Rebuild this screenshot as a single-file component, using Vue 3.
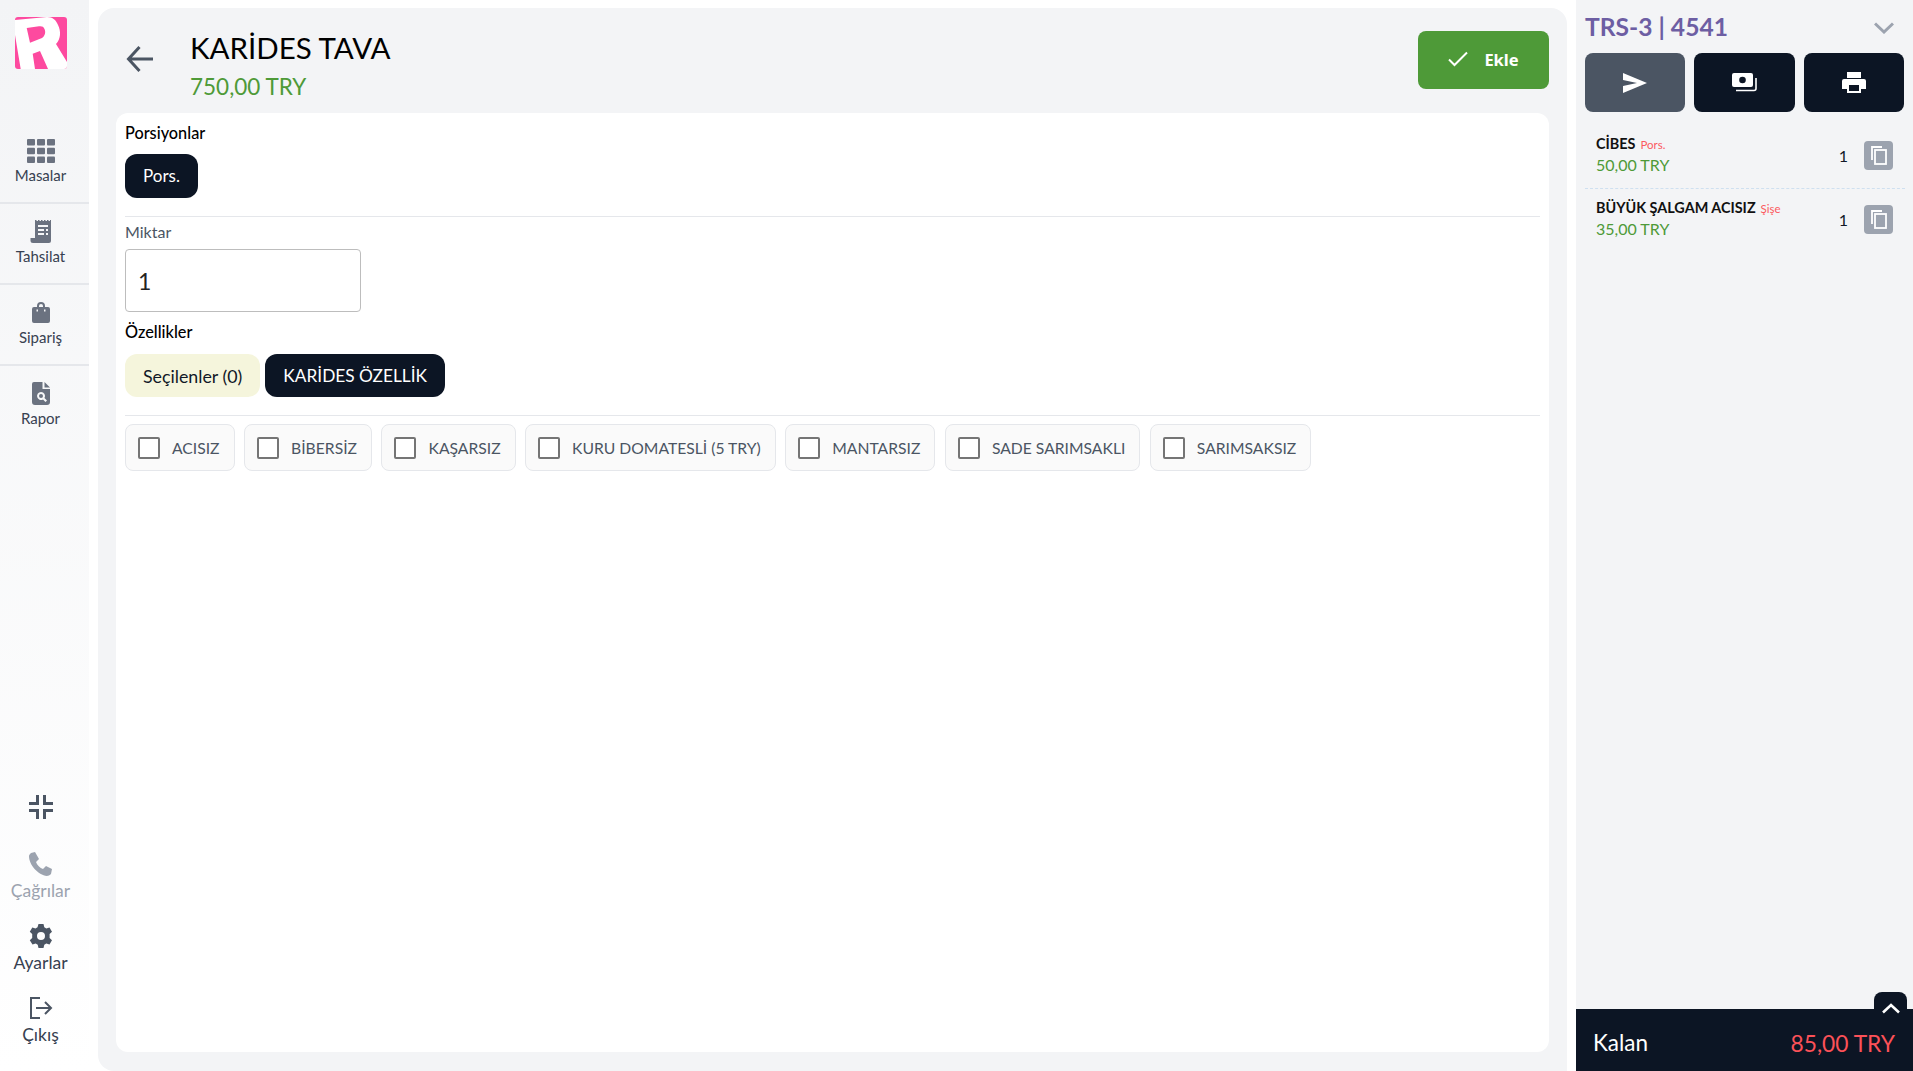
<script setup>
const nav = [
  { label: 'Masalar', icon: 'grid' },
  { label: 'Tahsilat', icon: 'receipt' },
  { label: 'Sipariş', icon: 'bag' },
  { label: 'Rapor', icon: 'report' }
]
const options = ['ACISIZ', 'BİBERSİZ', 'KAŞARSIZ', 'KURU DOMATESLİ (5 TRY)', 'MANTARSIZ', 'SADE SARIMSAKLI', 'SARIMSAKSIZ']
const items = [
  { name: 'CİBES', unit: 'Pors.', price: '50,00 TRY' },
  { name: 'BÜYÜK ŞALGAM ACISIZ', unit: 'Şişe', price: '35,00 TRY' }
]
</script>

<template>
  <div class="app">
    <aside class="side">
      <svg class="logo" viewBox="0 0 52 52">
        <rect width="52" height="52" rx="3" fill="#fd4a9f" />
        <path fill="#fff" fill-rule="evenodd" d="M0 3 32 0C38 0 41 3 43 8 46 14 46 22 41 27L52 45V49A3 3 0 0 1 49 52H33L25 34 17.700 36.700 20 52H5.700L0 18ZM11.700 11 15 25.700 27 21C30 19 31 15 29.500 12 28.500 9.500 27 9 24 9.300Z" />
      </svg>
      <nav class="nav">
        <a v-for="n in nav" :key="n.label" class="nav-item">
          <svg v-if="n.icon === 'grid'" class="nav-ic" viewBox="0 0 28 24" fill="#6b7280">
            <rect x="0" y="0" width="8" height="6.500" rx="1" /><rect x="10" y="0" width="8" height="6.500" rx="1" /><rect x="20" y="0" width="8" height="6.500" rx="1" />
            <rect x="0" y="8.700" width="8" height="6.500" rx="1" /><rect x="10" y="8.700" width="8" height="6.500" rx="1" /><rect x="20" y="8.700" width="8" height="6.500" rx="1" />
            <rect x="0" y="17.500" width="8" height="6.500" rx="1" /><rect x="10" y="17.500" width="8" height="6.500" rx="1" /><rect x="20" y="17.500" width="8" height="6.500" rx="1" />
          </svg>
          <svg v-else-if="n.icon === 'receipt'" class="nav-ic" viewBox="0 0 24 24" fill="#6b7280">
            <path d="M6 1h16v20a2 2 0 0 1-2 2H4a2.500 2.500 0 0 1-2.500-2.500V18H6ZM9 5v2h10V5Zm0 4v2h6V9Zm8 0v2h2V9Zm-8 4v2h6v-2Zm8 0v2h2v-2Z" fill-rule="evenodd" />
            <path d="M6 0h1.500v1H6Zm3 0h1.500v1H9Zm3 0h1.500v1H12Zm3 0h1.500v1H15Zm3 0h1.500v1H18Zm3 0h1v1h-1Z" />
          </svg>
          <svg v-else-if="n.icon === 'bag'" class="nav-ic" viewBox="0 0 24 24" fill="#6b7280">
            <path fill-rule="evenodd" d="M8 6V5a4 4 0 0 1 8 0v1h3a2 2 0 0 1 2 2v12a2 2 0 0 1-2 2H5a2 2 0 0 1-2-2V8a2 2 0 0 1 2-2ZM10 6h4V5a2 2 0 0 0-4 0ZM7.500 8.500v2h1.500v-2Zm7.500 0v2h1.500v-2Z" />
          </svg>
          <svg v-else class="nav-ic" viewBox="0 0 24 24" fill="#6b7280">
            <path fill-rule="evenodd" d="M5 0h8.500v7H21v13a3 3 0 0 1-3 3H6a3 3 0 0 1-3-3V2a2 2 0 0 1 2-2Zm10.500 0L21 5.500h-5.500ZM12 10a4 4 0 1 0 2 7.500l2.500 2.500 1.500-1.500-2.500-2.500A4 4 0 0 0 12 10Zm0 2a2 2 0 1 1 0 4 2 2 0 0 1 0-4Z" />
          </svg>
          <span>{{ n.label }}</span>
        </a>
      </nav>
      <div class="side-foot">
        <svg class="shrink" viewBox="0 0 24 24" fill="#4b5563"><path d="M0 7h7V0h3v10H0ZM14 0h3v7h7v3H14ZM0 14h10v10H7v-7H0ZM14 14h10v3h-7v7h-3Z" /></svg>
        <a class="foot-item muted">
          <svg viewBox="0 0 24 24" fill="#9ca3af"><path d="M3 1 7 0l4 7-3 3c1 3 4 6 7 7l3-3 6 3-1 5c-1 1-3 2-4 2C10 23 1 13 1 4c0-1 1-2 2-3Z" /></svg>
          <span>Çağrılar</span>
        </a>
        <a class="foot-item">
          <svg viewBox="0 0 24 24" fill="#4b5563"><path fill-rule="evenodd" d="M9.500 0h5l.8 3.300 2 1.100 3.200-1 2.500 4.300-2.400 2.300v4l2.400 2.300-2.500 4.300-3.200-1-2 1.100-.8 3.300h-5l-.8-3.300-2-1.100-3.200 1L.8 16.300l2.400-2.300v-4L.8 7.700l2.500-4.300 3.200 1 2-1.100ZM12 8a4 4 0 1 0 0 8 4 4 0 0 0 0-8Z" /></svg>
          <span>Ayarlar</span>
        </a>
        <a class="foot-item">
          <svg viewBox="0 0 24 24" fill="none" stroke="#4b5563" stroke-width="2"><path d="M11 2H2v20h9M7 12h15M16 6l6 6-6 6" /></svg>
          <span>Çıkış</span>
        </a>
      </div>
    </aside>

    <main class="main">
      <header class="head">
        <svg class="back" viewBox="0 0 28 28" fill="none" stroke="#4b5563" stroke-width="3"><path d="M27 14H2.500M13.500 2 2.500 14l11 12" /></svg>
        <div class="title">
          <h1>KARİDES TAVA</h1>
          <p>750,00 TRY</p>
        </div>
        <button class="add">
          <svg viewBox="0 0 20 16" fill="none" stroke="#fff" stroke-width="2"><path d="M1 8.500 6.500 14 19 1.500" /></svg>
          <span>Ekle</span>
        </button>
      </header>
      <section class="card">
        <h2>Porsiyonlar</h2>
        <button class="pill dark small">Pors.</button>
        <hr class="rule" />
        <label class="lbl">Miktar</label>
        <div class="qty">1</div>
        <h2 class="mt">Özellikler</h2>
        <div class="tabs">
          <button class="pill soft">Seçilenler (0)</button>
          <button class="pill dark tight">KARİDES ÖZELLİK</button>
        </div>
        <hr class="rule r2" />
        <div class="opts">
          <label v-for="o in options" :key="o" class="opt"><i class="box"></i><span>{{ o }}</span></label>
        </div>
      </section>
    </main>

    <aside class="right">
      <div class="r-head">
        <span class="tbl">TRS-3 | 4541</span>
        <svg class="chev" viewBox="0 0 20 12" fill="none" stroke="#9ca3af" stroke-width="3"><path d="M1 1.500 10 10l9-8.500" /></svg>
      </div>
      <div class="actions">
        <button class="act grey">
          <svg width="24" height="20" viewBox="0 0 24 20" fill="#fff"><path d="M0 0 24 10 0 20V13L14 10 0 7Z" /></svg>
        </button>
        <button class="act mid">
          <svg width="25" height="19" viewBox="0 0 25 19"><path fill="#fff" d="M2 0h17a2 2 0 0 1 2 2v10a2 2 0 0 1-2 2H2a2 2 0 0 1-2-2V2a2 2 0 0 1 2-2Z" /><circle cx="10.500" cy="7" r="3.300" fill="#0c1524" /><path fill="none" stroke="#fff" stroke-width="1.600" d="M24 5v10.500a2 2 0 0 1-2 2H4" /></svg>
        </button>
        <button class="act">
          <svg width="24" height="21" viewBox="0 0 24 21" fill="#fff"><path fill-rule="evenodd" d="M5 0h14v6H5ZM2 7h20a2 2 0 0 1 2 2v8h-5v4H5v-4H0V9a2 2 0 0 1 2-2Zm5 6v6h10v-6Z" /></svg>
        </button>
      </div>
      <ul class="lines">
        <li v-for="it in items" :key="it.name" class="line">
          <div class="l-info">
            <div class="l-name"><b>{{ it.name }}</b><em>{{ it.unit }}</em></div>
            <div class="l-price">{{ it.price }}</div>
          </div>
          <span class="l-qty">1</span>
          <button class="copy">
            <svg width="16" height="19" viewBox="0 0 16 19" fill="none" stroke="#fff" stroke-width="1.800"><path d="M1 14V1h10" /><rect x="4" y="4" width="11" height="14" /></svg>
          </button>
        </li>
      </ul>
      <footer class="total">
        <button class="up">
          <svg width="18" height="11" viewBox="0 0 18 11" fill="none" stroke="#fff" stroke-width="2.600"><path d="M1 9.500 9 2l8 7.500" /></svg>
        </button>
        <span class="k">Kalan</span>
        <span class="v">85,00 TRY</span>
      </footer>
    </aside>
  </div>
</template>

<style>
html, body { margin: 0; background: #fff; }
</style>

<style scoped>
* { box-sizing: border-box; }
.app {
  display: flex;
  width: 1913px;
  height: 1071px;
  overflow: hidden;
  font-family: "Lato", "Noto Sans", sans-serif;
  color: #111827;
  background: #fff;
}
.side {
  width: 89px;
  flex: none;
  display: flex;
  flex-direction: column;
  align-items: center;
  background: linear-gradient(180deg, #f3f4f6 0%, #ffffff 100%);
}
.logo { width: 52px; height: 52px; margin: 17px 7px 0 0; flex: none; }
.nav { margin-top: 54px; width: 100%; display: flex; flex-direction: column; }
.nav-item {
  height: 81px;
  padding: 16px 8px 0 0;
  display: flex;
  flex-direction: column;
  align-items: center;
  border-bottom: 2px solid #e5e7eb;
  font-size: 15px;
  line-height: 18px;
  color: #374151;
}
.nav-item:last-child { border-bottom: 0; }
.nav-ic { width: 28px; height: 24px; margin-bottom: 3px; }
.side-foot { margin-top: auto; width: 100%; display: flex; flex-direction: column; align-items: center; padding: 0 8px 3px 0; }
.shrink { width: 24px; height: 24px; margin-bottom: 33px; }
.foot-item { display: flex; flex-direction: column; align-items: center; font-size: 17.500px; color: #374151; height: 72px; }
.foot-item svg { width: 24px; height: 24px; margin-bottom: 4px; }
.foot-item.muted { color: #9ca3af; }
.main {
  margin: 8px 9px 0;
  width: 1469px;
  flex: none;
  height: 1063px;
  background: #f3f4f6;
  border-radius: 16px 16px 0 16px;
  padding: 0 18px 19px;
  display: flex;
  flex-direction: column;
}
.head { height: 105px; flex: none; display: flex; align-items: flex-start; }
.back { width: 28px; height: 28px; margin: 37px 0 0 10px; flex: none; }
.title { margin-left: 36px; padding-top: 20px; flex: 1; }
.title h1 { margin: 0; font-size: 29.500px; line-height: 40px; font-weight: 400; color: #000; }
.title p { margin: 4px 0 0; font-size: 22.500px; line-height: 30px; color: #4e9a38; }
.add {
  width: 131px; height: 58px; margin-top: 23px; padding: 0 0 2px;
  background: #4e9a38; border: 0; border-radius: 8px;
  display: flex; align-items: center; justify-content: center; gap: 16px;
  color: #fff; font: 700 16.500px "Noto Sans", sans-serif;
}
.add svg { width: 20px; height: 16px; }
.card {
  flex: 1;
  background: #fff;
  border-radius: 12px;
  padding: 9px;
}
h2 { margin: 0; font-size: 16.300px; line-height: 22px; font-weight: 500; color: #000; }
h2.mt { margin-top: 9px; }
.pill {
  height: 43px; padding: 0 18px; border: 0; border-radius: 12px;
  font: 400 17.800px "Lato", sans-serif;
}
.pill.small { margin-top: 10px; display: block; height: 44px; padding-bottom: 2px; font-size: 17px; }
.pill.tight { font-size: 17.300px; }
.dark { background: #0c1524; color: #fff; }
.soft { background: #f5f5dc; color: #111827; }
.rule { border: 0; border-top: 1px solid #e5e7eb; margin: 18px 0 0; }
.r2 { margin-top: 18px; }
.lbl { display: block; margin-top: 4px; font-size: 16px; line-height: 22px; color: #4b5563; }
.qty {
  width: 236px; height: 63px; margin-top: 6px;
  border: 1px solid #bdbdbd; border-radius: 4px;
  display: flex; align-items: center; padding-left: 12px;
  font-size: 23px; color: #222;
}
.tabs { display: flex; gap: 5px; margin-top: 11px; }
.opts { display: flex; gap: 9.500px; margin-top: 8px; }
.opt {
  height: 47px; padding: 0 14px 0 12px;
  display: flex; align-items: center; gap: 12px;
  background: #fafafa; border: 1px solid #e5e7eb; border-radius: 8px;
  font-size: 15.700px; color: #4b5563; white-space: nowrap;
}
.box { width: 22px; height: 22px; border: 2px solid #757575; border-radius: 2px; background: #fff; }
.right {
  width: 337px; flex: none; height: 1071px;
  background: #f3f4f6;
  display: flex; flex-direction: column;
}
.r-head { height: 53px; flex: none; display: flex; align-items: center; justify-content: space-between; padding: 0 19px 0 9px; }
.tbl { font-size: 24.600px; font-weight: 700; color: #6d5ea3; }
.chev { width: 20px; height: 12px; margin-top: 2px; }
.actions { display: flex; gap: 9px; padding-left: 9px; }
.act { width: 100px; height: 59px; border: 0; border-radius: 8px; background: #0c1524; display: flex; align-items: center; justify-content: center; padding: 0; }
.act.mid { width: 101px; }
.act.grey { background: #4b5563; }
.lines { list-style: none; margin: 12px 0 0; padding: 0 0 0 9px; flex: 1; }
.line { display: flex; align-items: center; width: 320px; height: 64px; padding: 0 0 0 11px; }
.line + .line { border-top: 1px dashed #cfe0f0; }
.l-info { flex: 1; padding-bottom: 4px; }
.l-name { display: flex; align-items: baseline; gap: 5px; }
.l-name b { font-size: 14.400px; font-weight: 700; color: #111; }
.l-name em { font-style: normal; font-size: 11.500px; color: #fb5a60; }
.l-price { font-size: 16px; color: #4e9a38; margin-top: 3px; }
.l-qty { font-size: 16px; margin: 0 16px 2px 0; }
.copy { width: 29px; height: 29px; margin: 0 12px 2px 0; border: 0; border-radius: 4px; background: #9ca3af; display: flex; align-items: center; justify-content: center; padding: 0; }
.total {
  position: relative; height: 62px; flex: none;
  background: #0c1524; color: #fff;
  display: flex; align-items: center; justify-content: space-between;
  padding: 5px 18px 0 17px;
}
.k { font-size: 22.500px; }
.v { font-size: 22.800px; color: #fc5158; }
.up {
  position: absolute; right: 6px; top: -17px; width: 33px; height: 22px;
  background: #0c1524; border: 0; border-radius: 8px 8px 0 0; padding: 0;
  display: flex; align-items: flex-end; justify-content: center;
}
</style>
